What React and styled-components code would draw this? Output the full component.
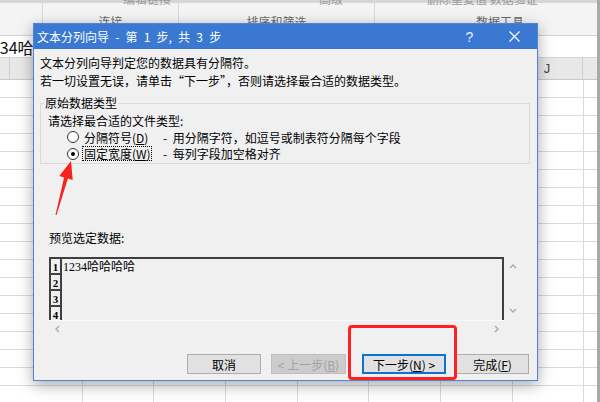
import React from 'react'
import styled, { createGlobalStyle } from 'styled-components'

const GlobalStyle = createGlobalStyle`
  * { box-sizing: border-box; }
  html, body { margin: 0; padding: 0; background: #fff; }
  body { font-family: "Noto Sans CJK SC", "Liberation Sans", sans-serif; }
`

const Screen = styled.div`
  position: relative;
  width: 600px;
  height: 402px;
  overflow: hidden;
  background: #fff;
  border-right: 3px solid #a9a9a9;
  display: flex;
  flex-direction: column;
`

/* ---------- excel behind the dialog ---------- */

const Ribbon = styled.div`
  height: 36px;
  flex: none;
  display: flex;
  overflow: hidden;
  background: linear-gradient(#d6d6d6 0 3px, #f4f4f4 3px);
  border-bottom: 1px solid #d4d4d4;
`

const Group = styled.div`
  width: ${p => p.$w}px;
  flex: none;
  display: flex;
  flex-direction: column;
  border-right: ${p => (p.$last ? 'none' : '1px solid #d9d9d9')};
  overflow: hidden;
`

const TopText = styled.div`
  margin-top: -8px;
  padding-left: ${p => p.$x}px;
  font-size: 12px;
  line-height: 14px;
  color: #9a9a9a;
  white-space: nowrap;
`

const GroupLabel = styled.div`
  margin-top: auto;
  margin-bottom: 6px;
  text-align: center;
  font-size: 12px;
  line-height: 14px;
  color: #6a6a6a;
  white-space: nowrap;
`

const FormulaBar = styled.div`
  height: 22px;
  flex: none;
  display: flex;
  align-items: center;
  overflow: hidden;
  background: #fff;
  border-bottom: 1px solid #d4d4d4;
`

const CellText = styled.span`
  margin-left: -18px;
  font-size: 16px;
  line-height: 20px;
  color: #111;
  white-space: nowrap;
`

const ColumnHeader = styled.div`
  height: 22px;
  flex: none;
  display: flex;
  background: #e8e8e8;
  border-bottom: 1px solid #c8c8c8;
`

const HeadCell = styled.div`
  width: ${p => p.$w}px;
  flex: none;
  display: flex;
  align-items: center;
  justify-content: center;
  border-right: 1px solid #d0d0d0;
  font-family: "Liberation Sans", sans-serif;
  font-size: 13px;
  color: #444;
`

const Sheet = styled.div`
  flex: 1;
  background-color: #fff;
  background-image:
    repeating-linear-gradient(to right, transparent 0 70.67px, #dadada 70.67px 71.67px),
    repeating-linear-gradient(to bottom, transparent 0 17px, #dadada 17px 18px);
  background-position: 11px 0, 0 0;
`

/* ---------- dialog ---------- */

const Dialog = styled.div`
  position: absolute;
  left: 33px;
  top: 23px;
  width: 505px;
  height: 358px;
  display: flex;
  flex-direction: column;
  background: #f0f0f0;
  border: 1px solid #4c84d9;
  box-shadow: 0 4px 14px rgba(0, 0, 0, 0.35);
`

const TitleBar = styled.div`
  height: 25px;
  flex: none;
  display: flex;
  align-items: center;
  padding-left: 3px;
  background: #3b78d2;
  color: #fff;
  font-size: 12px;
`

const Title = styled.div`
  flex: 1;
  white-space: nowrap;
  word-spacing: 3.5px;
`

const TitleButton = styled.div`
  width: 45px;
  height: 25px;
  display: flex;
  align-items: center;
  justify-content: center;
  font-family: "Liberation Sans", sans-serif;
  font-size: 14px;
  color: #e8efff;
`

const Body = styled.div`
  flex: 1;
  display: flex;
  flex-direction: column;
  padding: 5px 0 7px;
  font-size: 12px;
  color: #000;
`

const Para = styled.div`
  padding-left: 6px;
  line-height: 18px;
  white-space: nowrap;
`

const Frame = styled.fieldset`
  margin: 6px 7px 0 6px;
  padding: 3px 7px 1px;
  min-width: 0;
  border: 1px solid #dadada;
`

const Legend = styled.legend`
  margin-left: -4px;
  padding: 0 1px;
  line-height: 14px;
  font-size: 12px;
`

const Hint = styled.div`
  line-height: 16px;
  white-space: nowrap;
`

const OptionRow = styled.div`
  height: ${p => p.$h}px;
  display: flex;
  align-items: center;
  padding-left: 19px;
  white-space: nowrap;
`

const Radio = styled.span`
  width: 12px;
  height: 12px;
  flex: none;
  display: flex;
  align-items: center;
  justify-content: center;
  border: 1px solid #333;
  border-radius: 50%;
  background: #fff;

  &::after {
    content: '';
    width: 4px;
    height: 4px;
    border-radius: 50%;
    background: ${p => (p.$checked ? '#000' : 'transparent')};
  }
`

const OptionLabel = styled.span`
  width: 70px;
  margin-left: 3px;
  padding-left: 1px;
  line-height: 13px;
  border: 1px dotted ${p => (p.$focus ? '#000' : 'transparent')};
`

const Desc = styled.span`
  margin-left: 11px;
  word-spacing: 3px;
`

const PreviewLabel = styled.div`
  margin-top: 66px;
  padding-left: 15px;
  line-height: 16px;
`

const Preview = styled.div`
  margin: 11px 15px 0;
  height: 80px;
  display: grid;
  grid-template-columns: 1fr 18px;
  grid-template-rows: 63px 17px;
`

const PreviewArea = styled.div`
  display: flex;
  overflow: hidden;
  border: 2px solid #3f3f3f;
  border-bottom: none;
`

const RowNums = styled.div`
  width: 11px;
  flex: none;
  border-right: 2px solid #3f3f3f;
`

const RowNum = styled.div`
  height: 16px;
  display: flex;
  align-items: flex-end;
  justify-content: center;
  border-bottom: 2px solid #3f3f3f;
  font-family: "Liberation Serif", serif;
  font-weight: bold;
  font-size: 11px;
  line-height: 11px;
`

const DataText = styled.div`
  padding: 1px 0 0 1px;
  font-family: "Liberation Serif", "Noto Sans CJK SC", serif;
  font-size: 12px;
  line-height: 14px;
  white-space: nowrap;
`

const VScroll = styled.div`
  display: flex;
  flex-direction: column;
  align-items: center;
  justify-content: space-between;
  padding: 6px 0;
`

const HScroll = styled.div`
  display: flex;
  align-items: center;
  justify-content: space-between;
  padding: 0 4px 0 5px;
  border-top: 1px solid #fbfbfb;
`

const ButtonRow = styled.div`
  margin-top: 17px;
  display: flex;
  justify-content: flex-end;
  padding-right: 8px;
`

const Button = styled.div`
  width: ${p => p.$w}px;
  height: 20px;
  margin-left: ${p => p.$ml || 0}px;
  display: flex;
  align-items: center;
  justify-content: center;
  font-size: 12px;
  white-space: nowrap;
  background: ${p => (p.$disabled ? '#cccccc' : '#e1e1e1')};
  color: ${p => (p.$disabled ? '#a2a2a2' : '#000')};
  border: ${p => (p.$focus ? '2px solid #0a74d6' : p.$disabled ? '1px solid #bfbfbf' : '1px solid #adadad')};
`

/* ---------- annotations ---------- */

const Highlight = styled.div`
  position: absolute;
  left: 348px;
  top: 325px;
  width: 109px;
  height: 55px;
  border: 3px solid #ff2020;
  border-radius: 4px;
  pointer-events: none;
`

const Arrow = styled.svg`
  position: absolute;
  left: 50px;
  top: 155px;
  pointer-events: none;
`

const Chevron = ({ dir }) => {
  const pts = {
    up: '1,5 4,2 7,5',
    down: '1,2 4,5 7,2',
    left: '5,1 2,4 5,7',
    right: '2,1 5,4 2,7',
  }[dir]
  const v = dir === 'up' || dir === 'down'
  return (
    <svg width={v ? 8 : 7} height={v ? 7 : 8} viewBox={v ? '0 0 8 7' : '0 0 7 8'}>
      <polyline points={pts} fill="none" stroke="#a8a8a8" strokeWidth="1.3" />
    </svg>
  )
}

const cols = [
  { w: 10, l: '' },
  { w: 72, l: 'C' },
  { w: 71, l: 'D' },
  { w: 72, l: 'E' },
  { w: 72, l: 'F' },
  { w: 71, l: 'G' },
  { w: 72, l: 'H' },
  { w: 72, l: 'I' },
  { w: 71, l: 'J' },
  { w: 20, l: '' },
]

export default function App() {
  return (
    <Screen>
      <GlobalStyle />
      <Ribbon>
        <Group $w={43}>
          <TopText $x={0}> </TopText>
          <GroupLabel> </GroupLabel>
        </Group>
        <Group $w={136}>
          <TopText $x={80}>编辑链接</TopText>
          <GroupLabel>连接</GroupLabel>
        </Group>
        <Group $w={196}>
          <TopText $x={140}>高级</TopText>
          <GroupLabel>排序和筛选</GroupLabel>
        </Group>
        <Group $w={250} $last>
          <TopText $x={52}>删除重复值 数据验证</TopText>
          <GroupLabel>数据工具</GroupLabel>
        </Group>
      </Ribbon>
      <FormulaBar>
        <CellText>1234哈哈哈哈</CellText>
      </FormulaBar>
      <ColumnHeader>
        {cols.map((c, i) => (
          <HeadCell key={i} $w={c.w}>{c.l}</HeadCell>
        ))}
      </ColumnHeader>
      <Sheet />

      <Dialog>
        <TitleBar>
          <Title>文本分列向导 - 第 1 步, 共 3 步</Title>
          <TitleButton>?</TitleButton>
          <TitleButton>
            <svg width="11" height="11" viewBox="0 0 11 11">
              <path d="M0.5 0.5 L10.5 10.5 M10.5 0.5 L0.5 10.5" stroke="#fff" strokeWidth="1.2" />
            </svg>
          </TitleButton>
        </TitleBar>
        <Body>
          <Para>文本分列向导判定您的数据具有分隔符。</Para>
          <Para>若一切设置无误，请单击“下一步”，否则请选择最合适的数据类型。</Para>
          <Frame>
            <Legend>原始数据类型</Legend>
            <Hint>请选择最合适的文件类型:</Hint>
            <OptionRow $h={16}>
              <Radio />
              <OptionLabel>分隔符号(<u>D</u>)</OptionLabel>
              <Desc>- 用分隔字符，如逗号或制表符分隔每个字段</Desc>
            </OptionRow>
            <OptionRow $h={17}>
              <Radio $checked />
              <OptionLabel $focus>固定宽度(<u>W</u>)</OptionLabel>
              <Desc>- 每列字段加空格对齐</Desc>
            </OptionRow>
          </Frame>
          <PreviewLabel>预览选定数据:</PreviewLabel>
          <Preview>
            <PreviewArea>
              <RowNums>
                <RowNum>1</RowNum>
                <RowNum>2</RowNum>
                <RowNum>3</RowNum>
                <RowNum>4</RowNum>
              </RowNums>
              <DataText>1234哈哈哈哈</DataText>
            </PreviewArea>
            <VScroll>
              <Chevron dir="up" />
              <Chevron dir="down" />
            </VScroll>
            <HScroll>
              <Chevron dir="left" />
              <Chevron dir="right" />
            </HScroll>
          </Preview>
          <ButtonRow>
            <Button $w={74}>取消</Button>
            <Button $w={75} $ml={10} $disabled>&lt; 上一步(<u>B</u>)</Button>
            <Button $w={84} $ml={16} $focus>下一步(<u>N</u>) &gt;</Button>
            <Button $w={73} $ml={10}>完成(<u>F</u>)</Button>
          </ButtonRow>
        </Body>
      </Dialog>

      <Highlight />
      <Arrow width="30" height="65" viewBox="0 0 30 65">
        <polygon
          points="21,6 22.7,24.9 17.9,23.5 6.5,60 5.5,60 14.1,22.5 9.3,21.1"
          fill="#f5231b"
        />
      </Arrow>
    </Screen>
  )
}
